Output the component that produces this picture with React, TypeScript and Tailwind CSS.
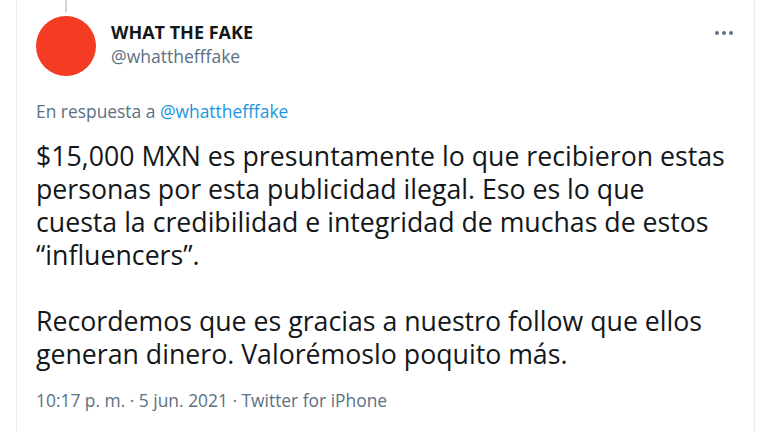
export default function App() {
  return (
    <div className="h-[432px] w-[768px] overflow-hidden bg-white" style={{ fontFamily: '"Open Sans", "Noto Sans", sans-serif' }}>
      <div className="ml-[16px] h-full w-[739px] border-x border-[#e6ecf0] pl-[19px] pr-[21px]">
        {/* thread line */}
        <div className="ml-[29px] h-[12px] w-[2px] bg-[#ccd6dd]" />
        <div className="mt-[4px] flex items-start">
          <div className="h-[60px] w-[60px] shrink-0 rounded-full bg-[#f43b23]" />
          <div className="ml-[15px] mt-[4px] flex-1">
            <div className="text-[18px] font-bold leading-[24px] text-[#14171a]">WHAT THE FAKE</div>
            <div className="text-[17.5px] leading-[24px] text-[#5b7083]">@whatthefffake</div>
          </div>
          <div className="mt-[15px] flex gap-[3px]">
            <span className="h-[4px] w-[4px] rounded-full bg-[#5b7083]" />
            <span className="h-[4px] w-[4px] rounded-full bg-[#5b7083]" />
            <span className="h-[4px] w-[4px] rounded-full bg-[#5b7083]" />
          </div>
        </div>
        <div className="mt-[25px] text-[17.4px] leading-[20px] text-[#5b7083]">
          En respuesta a <span className="text-[#1b95e0]">@whatthefffake</span>
        </div>
        <div className="mt-[18px] whitespace-nowrap text-[26.7px] leading-[33px] text-[#14171a]">
          <p>
            $15,000 MXN es presuntamente lo que recibieron estas
            <br />
            personas por esta publicidad ilegal. Eso es lo que
            <br />
            cuesta la credibilidad e integridad de muchas de estos
            <br />
            “influencers”.
          </p>
          <p className="mt-[33px]">
            Recordemos que es gracias a nuestro follow que ellos
            <br />
            generan dinero. Valorémoslo poquito más.
          </p>
        </div>
        <div className="mt-[18px] text-[17.4px] leading-[24px] text-[#5b7083]">10:17 p. m. · 5 jun. 2021 · Twitter for iPhone</div>
      </div>
    </div>
  );
}
